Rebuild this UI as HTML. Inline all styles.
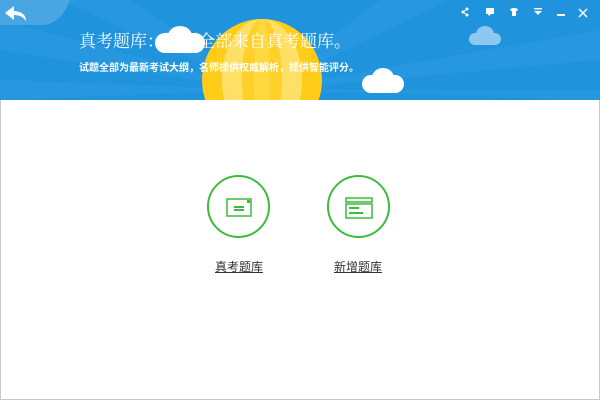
<!DOCTYPE html>
<html><head><meta charset="utf-8"><style>
*{margin:0;padding:0;box-sizing:border-box}
body{width:600px;height:400px;overflow:hidden;background:#fff;font-family:"Liberation Sans","Noto Sans CJK SC",sans-serif;position:relative}
.hdr{position:absolute;left:0;top:0;width:600px;height:100px;background:#1f93dc;overflow:hidden}
.main{position:absolute;left:0;top:100px;width:600px;height:300px;border:1px solid #c9c9c9;border-top:none;background:#fff}
.t1{position:absolute;left:79px;top:27px;color:#fff;font-size:17px;font-family:"Noto Serif CJK SC",serif;white-space:nowrap}
.t2{position:absolute;left:79px;top:59px;color:#fff;font-size:10px;font-weight:bold;white-space:nowrap}
.circ{position:absolute;width:63px;height:63px;border:2px solid #3dbb3d;border-radius:50%}
.lbl{position:absolute;top:258px;font-size:12px;color:#333;text-decoration:underline;width:80px;text-align:center}
.cloud{position:absolute;background:#fff;border-radius:12px}
</style></head><body>
<div class="hdr">
<svg width="600" height="100" style="position:absolute;left:0;top:0">
<g fill="#2a9ae0" opacity="0.8">
<polygon points="262,90 0,20 0,50"/><polygon points="262,90 60,0 130,0"/><polygon points="262,90 380,0 450,0"/><polygon points="262,90 600,30 600,60"/><polygon points="262,90 0,80 0,100"/><polygon points="262,90 600,90 600,100"/>
</g>
<path d="M0 0 H70 Q62 22 45 25 H0Z" fill="#4aa6e2"/>
<path d="M26 21 Q26 12 14 11 L14 6 L5 13 L14 20 L14 15 Q22 15 26 21Z" fill="#fff"/>
<ellipse cx="262" cy="80" rx="60" ry="61" fill="#ffcc1a"/>
<ellipse cx="262" cy="80" rx="40" ry="61" fill="#ffe066"/>
<ellipse cx="262" cy="80" rx="20" ry="61" fill="#ffcf2a"/>
<ellipse cx="262" cy="80" rx="8" ry="61" fill="#ffd93e"/>
<g fill="#fff">
<circle cx="463" cy="12" r="1.5"/><circle cx="467" cy="9" r="1.5"/><circle cx="467" cy="15" r="1.5"/>
<path d="M467 9 L463 12 L467 15" stroke="#fff" fill="none"/>
<rect x="486" y="8" width="8" height="6"/><path d="M488 14 L489 16 L491 14Z"/>
<path d="M510 9 L513 8 L515 8 L518 9 L517 11 L516 11 L516 16 L512 16 L512 11 L511 11Z"/>
<rect x="534" y="8" width="8" height="1.5"/><path d="M534 11 H542 L538 15Z"/>
<rect x="557" y="14" width="8" height="2"/>
<path d="M579 9 L587 17 M587 9 L579 17" stroke="#fff" stroke-width="1.5"/>
</g>
</svg>
<div class="cloud" style="left:155px;top:33px;width:50px;height:20px"></div>
<div class="cloud" style="left:168px;top:26px;width:24px;height:20px;border-radius:50%"></div>
<div class="cloud" style="left:362px;top:75px;width:42px;height:18px"></div>
<div class="cloud" style="left:372px;top:68px;width:22px;height:20px;border-radius:50%"></div>
<div class="cloud" style="left:469px;top:33px;width:32px;height:12px;background:#8cc8ef"></div>
<div class="cloud" style="left:476px;top:26px;width:18px;height:16px;border-radius:50%;background:#8cc8ef"></div>
<div class="t1">真考题库：试题全部来自真考题库。</div>
<div class="t2">试题全部为最新考试大纲，名师提供权威解析，提供智能评分。</div>
</div>
<div class="main"></div>
<div class="circ" style="left:207px;top:175px"></div>
<div class="circ" style="left:327px;top:175px"></div>
<svg width="600" height="400" style="position:absolute;left:0;top:0">
<g fill="none" stroke="#3dbb3d" stroke-width="1.5">
<rect x="227" y="199" width="24" height="17"/>
<rect x="346" y="198" width="26" height="4"/>
<rect x="346" y="204" width="26" height="14"/>
</g>
<g fill="#3dbb3d"><rect x="234" y="206" width="10" height="2"/><rect x="234" y="209" width="10" height="2"/><rect x="247" y="200" width="3" height="3"/>
<rect x="349" y="207" width="10" height="2"/><rect x="349" y="212" width="14" height="2"/></g>
</svg>
<div class="lbl" style="left:199px">真考题库</div>
<div class="lbl" style="left:318px">新增题库</div>
</body></html>
